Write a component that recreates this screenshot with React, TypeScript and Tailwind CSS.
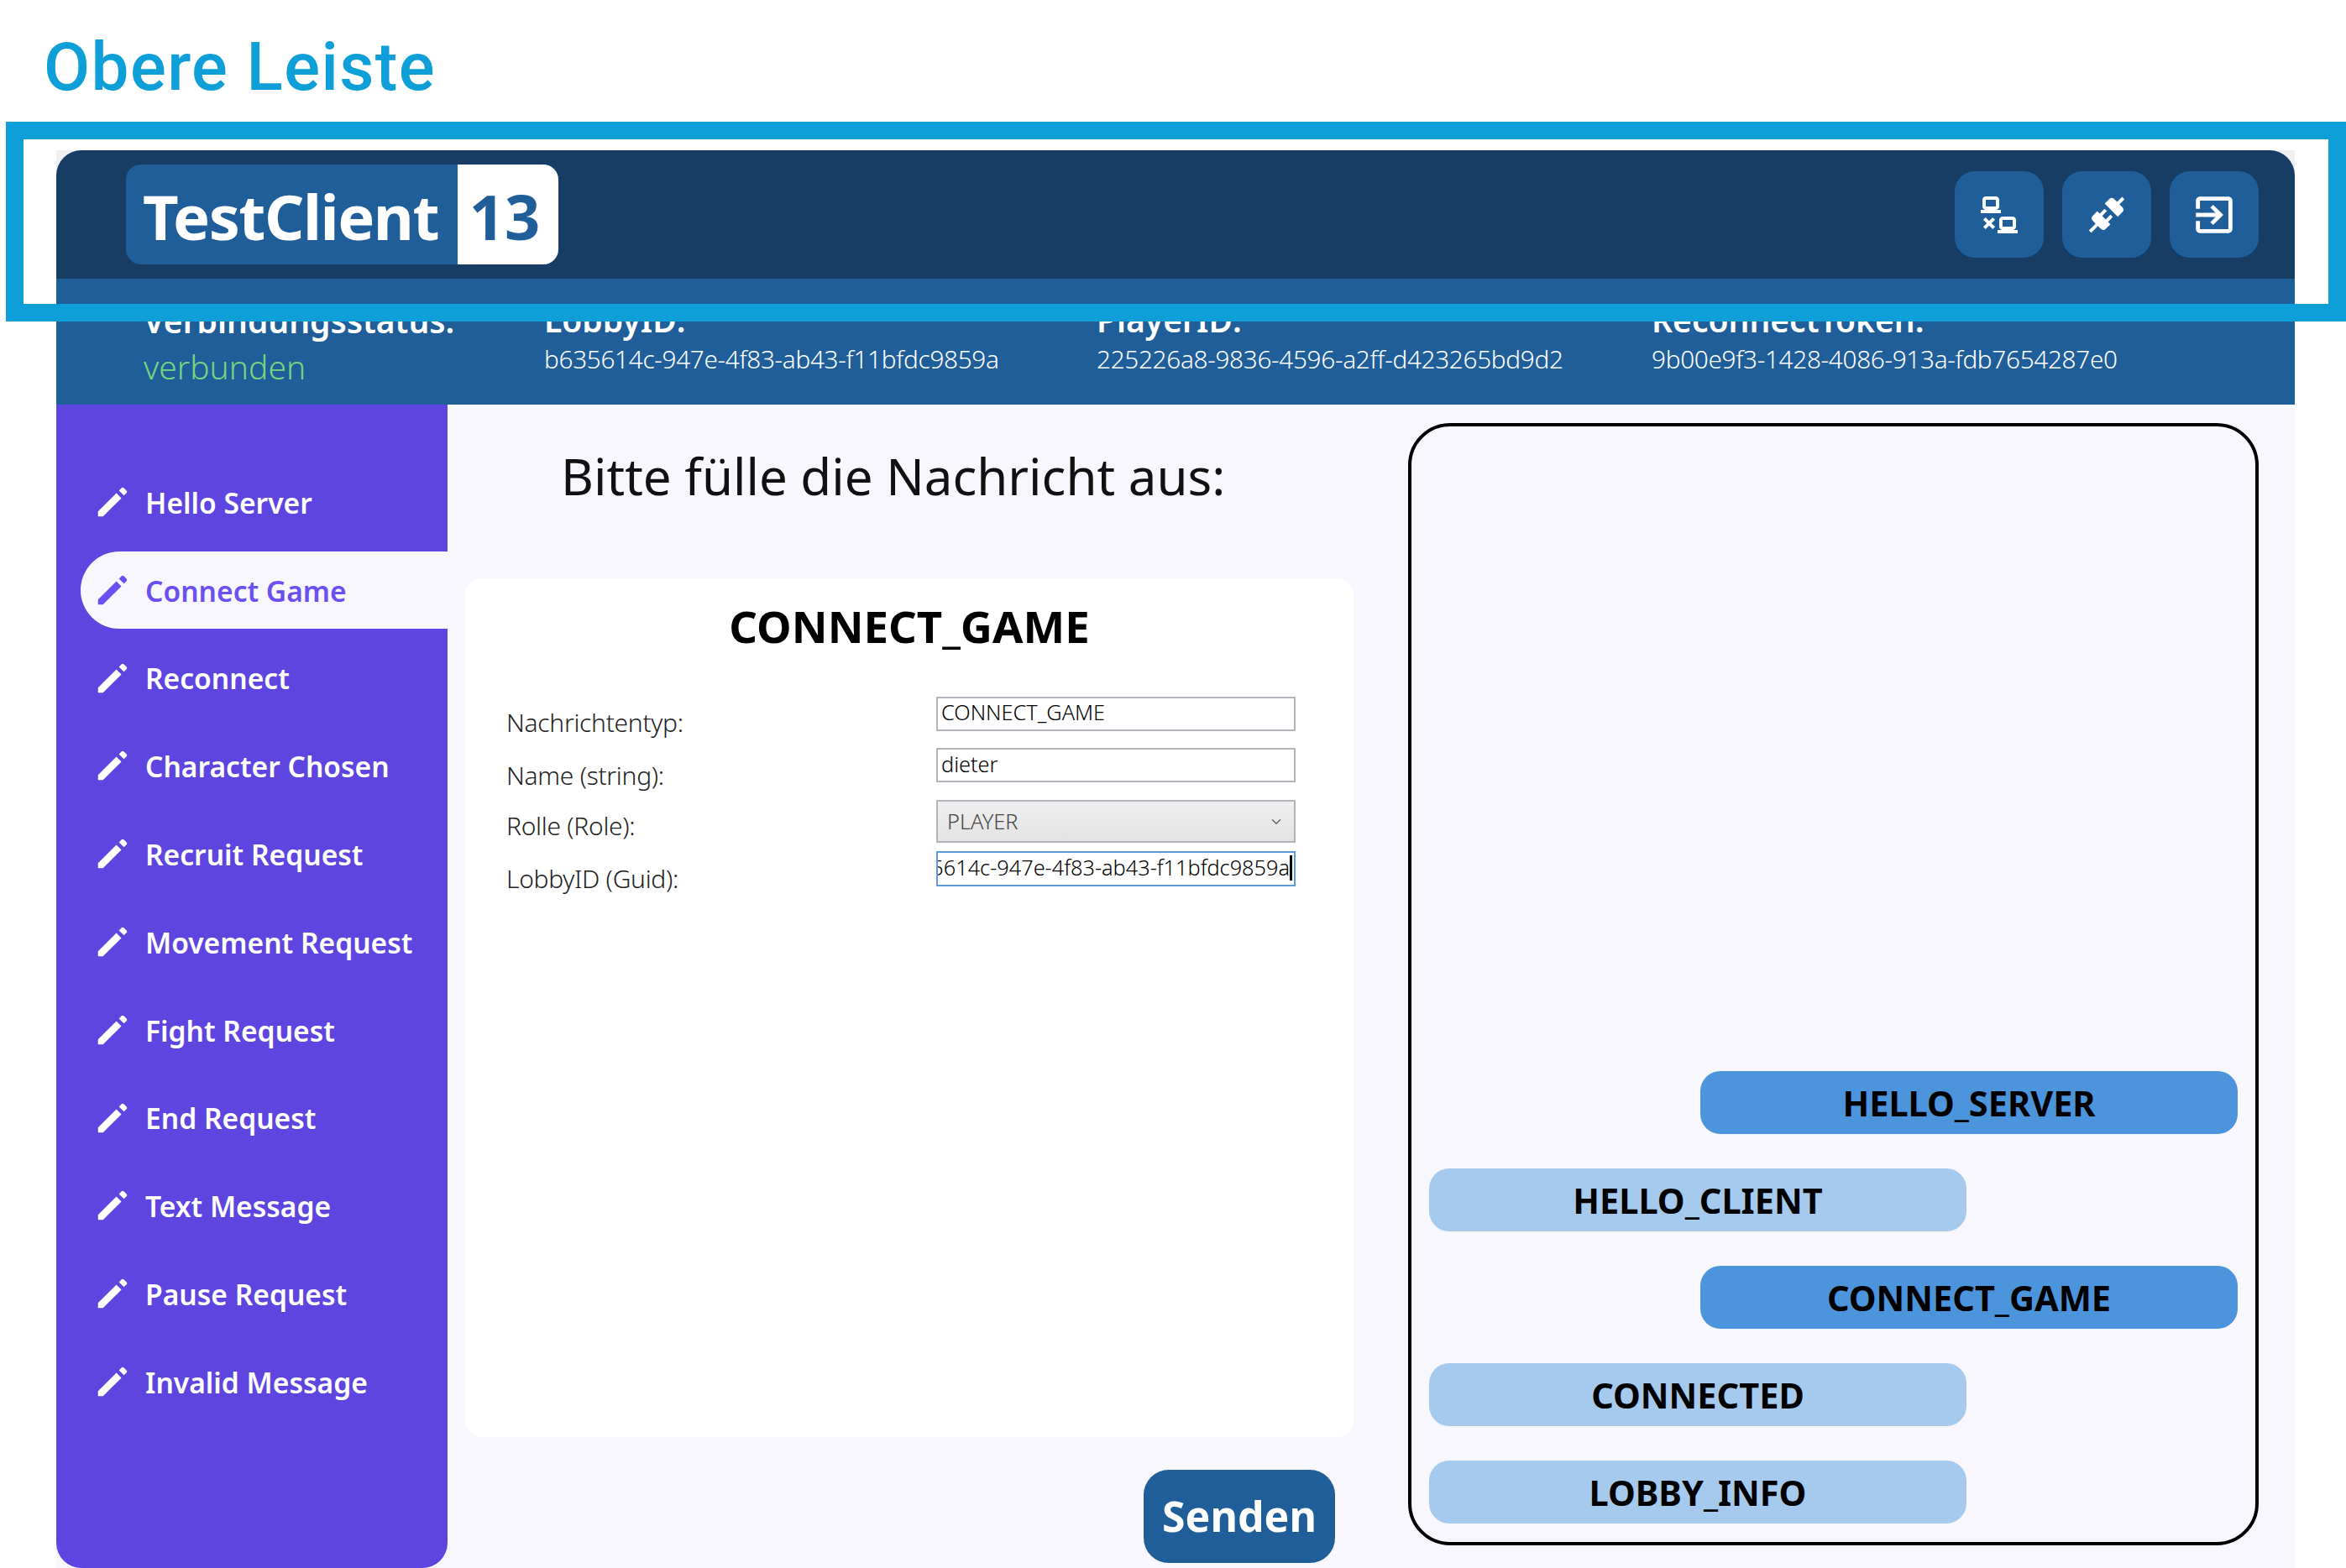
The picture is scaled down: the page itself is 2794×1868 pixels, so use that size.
import { ChevronDown } from 'lucide-react'

const menuItems = [
    'Hello Server',
    'Connect Game',
    'Reconnect',
    'Character Chosen',
    'Recruit Request',
    'Movement Request',
    'Fight Request',
    'End Request',
    'Text Message',
    'Pause Request',
    'Invalid Message',
]

const statusItems = [
    { label: 'LobbyID:', value: 'b635614c-947e-4f83-ab43-f11bfdc9859a', width: 'w-[658px]' },
    { label: 'PlayerID:', value: '225226a8-9836-4596-a2ff-d423265bd9d2', width: 'w-[661px]' },
    { label: 'ReconnectToken:', value: '9b00e9f3-1428-4086-913a-fdb7654287e0', width: 'w-[640px]' },
]

const messages = [
    { text: 'HELLO_SERVER', sent: true },
    { text: 'HELLO_CLIENT', sent: false },
    { text: 'CONNECT_GAME', sent: true },
    { text: 'CONNECTED', sent: false },
    { text: 'LOBBY_INFO', sent: false },
]

function MdiIcon({ d, className }: { d: string; className: string }) {
    return (
        <svg viewBox="0 0 24 24" fill="currentColor" className={className} aria-hidden="true">
            <path d={d} />
        </svg>
    )
}

// thinner than the stock pencil, body and cap are apart
const pencilPath =
    'M3,21V17.9L14.4,6.5L17.5,9.6L6.1,21ZM16,4.9L17.6,3.3C18,2.9 18.6,2.9 19,3.3L20.7,5C21.1,5.4 21.1,6 20.7,6.4L19.1,8Z'
const lanPath =
    'M4,1C2.89,1 2,1.89 2,3V7C2,8.11 2.89,9 4,9H1V11H13V9H10C11.11,9 12,8.11 12,7V3C12,1.89 11.11,1 10,1H4M4,3H10V7H4V3M14,13C12.89,13 12,13.89 12,15V19C12,20.11 12.89,21 14,21H11V23H23V21H20C21.11,21 22,20.11 22,19V15C22,13.89 21.11,13 20,13H14M3.88,13.46L2.46,14.88L4.59,17L2.46,19.12L3.88,20.54L6,18.41L8.12,20.54L9.54,19.12L7.41,17L9.54,14.88L8.12,13.46L6,15.59L3.88,13.46M14,15H20V19H14V15Z'
const plugPath =
    'M21.4 7.5C22.2 8.3 22.2 9.6 21.4 10.3L18.6 13.1L10.8 5.3L13.6 2.5C14.4 1.7 15.7 1.7 16.4 2.5L18.2 4.3L21.2 1.3L22.6 2.7L19.6 5.7L21.4 7.5M15.6 13.3L14.2 11.9L11.4 14.7L9.3 12.6L12.1 9.8L10.7 8.4L7.9 11.2L6.4 9.8L3.6 12.6C2.8 13.4 2.8 14.7 3.6 15.4L5.4 17.2L1.4 21.2L2.8 22.6L6.8 18.6L8.6 20.4C9.4 21.2 10.7 21.2 11.4 20.4L14.2 17.6L12.8 16.2L15.6 13.3Z'
const exitPath =
    'M19,3H5C3.89,3 3,3.89 3,5V9H5V5H19V19H5V15H3V19A2,2 0 0,0 5,21H19A2,2 0 0,0 21,19V5C21,3.89 20.1,3 19,3M10.08,15.58L11.5,17L16.5,12L11.5,7L10.08,8.41L12.67,11H3V13H12.67L10.08,15.58Z'

function TopButton({ d, iconClass }: { d: string; iconClass: string }) {
    return (
        <button className="flex h-[103px] w-[106px] items-center justify-center rounded-[24px] bg-[#205e9a] text-white">
            <MdiIcon d={d} className={iconClass} />
        </button>
    )
}

function FormRow({ label, height, labelTop, children }: { label: string; height: string; labelTop: string; children: React.ReactNode }) {
    return (
        <div className={`flex ${height}`}>
            <label className={`w-[561px] pl-[49px] ${labelTop} text-[30px] leading-[52px] font-light tracking-[-0.3px] text-[#222]`}>{label}</label>
            {children}
        </div>
    )
}

export default function App() {
    return (
        <div className="relative h-[1868px] w-[2794px] overflow-hidden bg-white font-['Noto_Sans','Open_Sans',sans-serif]">
            <h1 className="h-[179px] pl-[52px] pt-[27px] font-['Roboto',sans-serif] text-[80px] leading-[106px] font-medium tracking-[1.4px] text-[#0f9fd8]">
                Obere Leiste
            </h1>

            {/* frame of the annotation, lies over the app */}
            <div className="absolute left-[7px] top-[145px] z-10 h-[238px] w-[2787px] border-[21px] border-[#0f9fd8]" />

            <div className="ml-[67px] h-[1689px] w-[2666px] bg-[#f0f0f0]">
                <div className="flex h-full flex-col overflow-hidden rounded-t-[30px] bg-[#f8f7fd]">
                    <header className="flex h-[153px] shrink-0 items-start justify-between bg-[#173d65] pl-[83px] pr-[43px] pt-[17px]">
                        <div className="flex h-[119px] w-[515px] overflow-hidden rounded-[18px] bg-[#205e9a]">
                            <div className="w-[395px] pl-[20px] pt-[4px] text-[74px] leading-[116px] font-bold tracking-[-1.5px] text-white">TestClient</div>
                            <div className="flex flex-1 items-center justify-center bg-white pr-[8px] pt-[4px] text-[74px] leading-[116px] font-bold text-[#205e9a]">13</div>
                        </div>
                        <div className="flex gap-[22px] pt-[8px]">
                            <TopButton d={lanPath} iconClass="h-[48px] w-[48px]" />
                            <TopButton d={plugPath} iconClass="h-[48px] w-[48px]" />
                            <TopButton d={exitPath} iconClass="h-[58px] w-[58px]" />
                        </div>
                    </header>

                    <div className="flex h-[150px] shrink-0 bg-[#205e9a] pl-[104px] text-white">
                        <div className="w-[477px] pt-[24px]">
                            <div className="text-[39px] leading-[52px] font-semibold whitespace-nowrap">Verbindungsstatus:</div>
                            <div className="pt-[2px] text-[39px] leading-[54px] font-light text-[#74d680]">verbunden</div>
                        </div>
                        {statusItems.map((item) => (
                            <div key={item.label} className={`${item.width} pt-[24px]`}>
                                <div className="text-[39px] leading-[49px] font-semibold">{item.label}</div>
                                <div className="text-[29.7px] leading-[46px] font-light tracking-[-0.3px] whitespace-nowrap">{item.value}</div>
                            </div>
                        ))}
                    </div>

                    <div className="flex min-h-0 flex-1">
                        <nav className="flex w-[466px] shrink-0 flex-col rounded-b-[30px] bg-[#5f45e0] pl-[29px] pt-[70px]">
                            {menuItems.map((item) => {
                                const active = item === 'Connect Game'
                                return (
                                    <div
                                        key={item}
                                        className={`mb-[12.8px] flex h-[92px] items-center gap-[16px] rounded-l-[46px] pl-[15px] text-[33.6px] font-semibold ${
                                            active ? 'bg-[#f8f7fd] text-[#6b4ff0]' : 'text-white'
                                        }`}
                                    >
                                        <MdiIcon d={pencilPath} className="h-[46px] w-[46px] shrink-0" />
                                        <span className="pt-[2px] whitespace-nowrap">{item}</span>
                                    </div>
                                )
                            })}
                        </nav>

                        <main className="flex w-[1144px] shrink-0 flex-col pl-[21px]">
                            <h2 className="h-[207px] pl-[114px] pt-[43px] text-[60px] leading-[84px] text-[#111] whitespace-nowrap">
                                Bitte fülle die Nachricht aus:
                            </h2>
                            <section className="h-[1023px] w-[1058px] rounded-[20px] bg-white">
                                <h3 className="h-[141px] pt-[22px] text-center text-[52.7px] leading-[70px] font-bold text-black">CONNECT_GAME</h3>
                                <div className="flex flex-col">
                                    <FormRow label="Nachrichtentyp:" height="h-[61px]" labelTop="pt-[5px]">
                                        <input readOnly value="CONNECT_GAME" className="h-[41px] w-[428px] border-2 border-[#b3b3bb] bg-white px-[4px] pb-[5px] text-[25.3px] font-light text-black" />
                                    </FormRow>
                                    <FormRow label="Name (string):" height="h-[62px]" labelTop="pt-[7px]">
                                        <input readOnly value="dieter" className="h-[41px] w-[428px] border-2 border-[#b3b3bb] bg-white px-[4px] pb-[3px] text-[25.3px] font-light text-black" />
                                    </FormRow>
                                    <FormRow label="Rolle (Role):" height="h-[61px]" labelTop="pt-[5px]">
                                        <div className="flex h-[51px] w-[428px] items-center justify-between border-2 border-[#b3b3bb] bg-linear-to-b from-[#efefef] to-[#e3e3e3] pl-[11px] pr-[12px] text-[25.3px] font-light text-[#444]">
                                            PLAYER
                                            <ChevronDown className="h-[18px] w-[18px] text-[#666]" />
                                        </div>
                                    </FormRow>
                                    <FormRow label="LobbyID (Guid):" height="h-[62px]" labelTop="pt-[7px]">
                                        <div className="flex h-[42px] w-[428px] items-center justify-end overflow-hidden border-2 border-[#5c9be0] bg-white pb-[3px] pr-[2px] text-[25.3px] font-light text-black whitespace-nowrap">
                                            <span className="shrink-0">b635614c-947e-4f83-ab43-f11bfdc9859a</span>
                                            <span className="h-[30px] w-[3px] shrink-0 bg-black" />
                                        </div>
                                    </FormRow>
                                </div>
                            </section>
                            <div className="flex justify-end pr-[87px] pt-[39px]">
                                <button className="flex h-[111px] w-[228px] items-center justify-center rounded-[30px] bg-[#205e9a] text-[50px] font-bold text-white">
                                    Senden
                                </button>
                            </div>
                        </main>

                        <aside className="mt-[22px] flex h-[1337px] w-[1013px] shrink-0 flex-col justify-end gap-[41px] rounded-[50px] border-[4px] border-black px-[21px] pb-[22px]">
                            {messages.map((message) => (
                                <div
                                    key={message.text}
                                    className={`flex h-[75px] w-[640px] items-center justify-center rounded-[24px] pt-[2px] text-[41.5px] font-bold text-black ${
                                        message.sent ? 'self-end bg-[#4c94db]' : 'self-start bg-[#a6caed]'
                                    }`}
                                >
                                    {message.text}
                                </div>
                            ))}
                        </aside>
                    </div>
                </div>
            </div>
        </div>
    )
}
